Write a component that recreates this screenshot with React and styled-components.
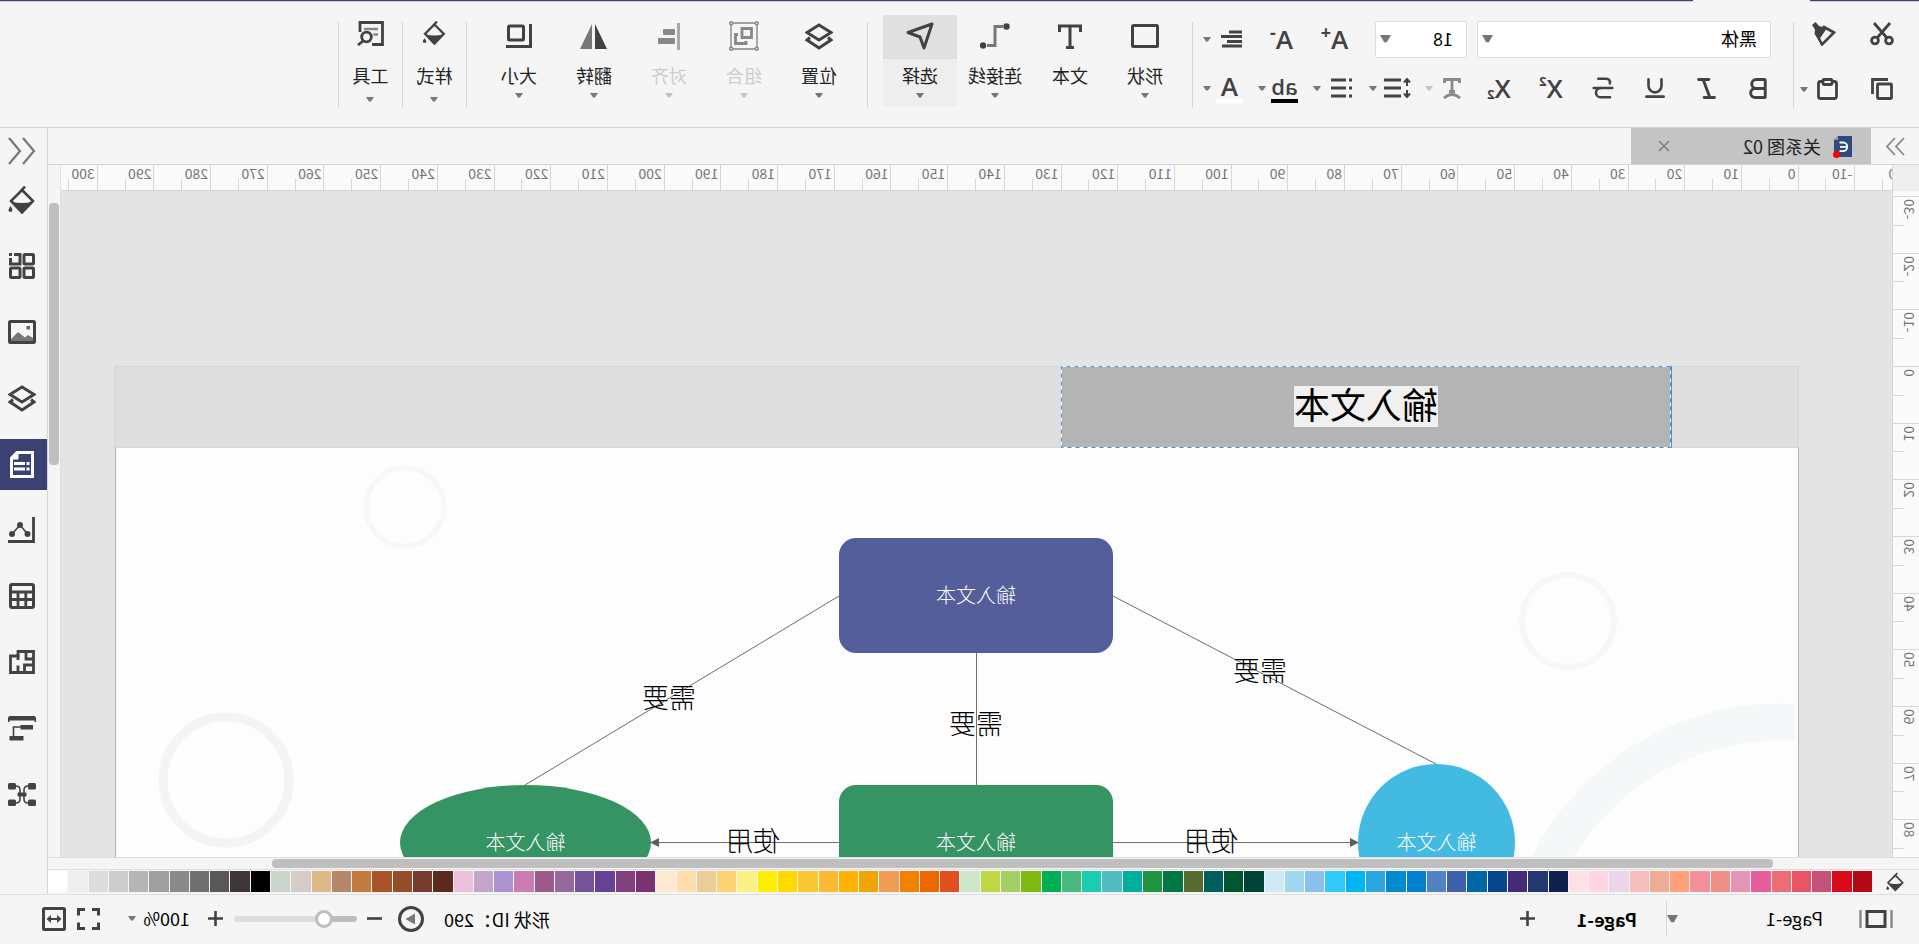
import React from 'react';
import styled, { createGlobalStyle, css } from 'styled-components';
import { Bold, Italic, Underline, Strikethrough } from 'lucide-react';

const GlobalStyle = createGlobalStyle`
  * {
    box-sizing: border-box;
  }
  body {
    margin: 0;
    overflow: hidden;
    background: #f5f5f5;
    color: #000;
    font-family: "Noto Sans CJK SC", "Noto Sans", sans-serif;
    font-size: 18px;
  }
  button, select, input {
    font: inherit;
    color: inherit;
  }
`;

const ink = '#424242';
const line = '#d6d6d6';

const Window = styled.div`
  display: flex;
  flex-direction: column;
  height: 100vh;
  background: #f5f5f5;
  transform: scaleX(-1);
`;

const TopLine = styled.div`
  display: flex;
  gap: 117px;
  height: 2px;
`;

const TopLinePart = styled.div`
  flex: ${(p) => (p.$grow ? 1 : '0 0 109px')};
  border-top: 1px solid #3c4174;
  background: #cfd0de;
`;

const Toolbar = styled.header`
  display: flex;
  align-items: flex-start;
  height: 126px;
  padding-top: 13px;
  border-bottom: 1px solid ${line};
`;

const Divider = styled.div`
  flex: none;
  width: 1px;
  height: ${(p) => p.$h || 86}px;
  margin-top: ${(p) => (p.$flat ? 0 : 7)}px;
  background: ${line};
`;

const PlainButton = styled.button`
  display: flex;
  align-items: center;
  justify-content: center;
  padding: 0;
  border: 0;
  background: none;
  color: ${(p) => (p.disabled ? '#8a8a8a' : ink)};
`;

const ClipboardGroup = styled.div`
  display: grid;
  grid-template-columns: 44px 66px;
  grid-template-rows: 38px 48px;
  gap: 12px 0;
  width: 125px;
  padding-left: 15px;
`;

const ClipButton = styled(PlainButton)`
  justify-content: ${(p) => (p.$wide ? 'flex-start' : 'center')};
  gap: 9px;
  padding-left: ${(p) => (p.$wide ? 22 : 0)}px;
`;

const FormatGroup = styled.div`
  width: 584px;
  margin: 0 8px;
`;

const FormatRow = styled.div`
  display: flex;
  align-items: center;
  height: ${(p) => p.$h}px;
  padding-left: ${(p) => p.$indent || 0}px;
`;

const FormatButton = styled(PlainButton)`
  width: ${(p) => p.$w || 52}px;
  height: 36px;
  justify-content: ${(p) => (p.$menu ? 'flex-end' : 'center')};
  gap: ${(p) => p.$gap || 10}px;
`;

const SelectBox = styled.label`
  position: relative;
  display: flex;
  align-items: center;
  width: ${(p) => p.$w}px;
  height: ${(p) => p.$h || 37}px;
  margin-right: ${(p) => p.$mr || 0}px;
  ${(p) =>
    p.$boxed &&
    css`
      border: 1px solid #dedede;
      border-radius: 2px;
      background: #fff;
    `}

  select {
    flex: 1;
    height: 100%;
    padding: 0 0 2px ${(p) => (p.$boxed ? 13 : 0)}px;
    border: 0;
    background: none;
    appearance: none;
    outline: none;
  }

  svg {
    position: absolute;
    right: ${(p) => (p.$boxed ? 4 : 0)}px;
    pointer-events: none;
  }
`;

const PageSelect = styled(SelectBox)`
  margin-left: 36px;
`;

const ZoomSelect = styled(SelectBox)`
  margin-left: 18px;
`;

const Glyph = styled.span`
  display: inline-flex;
  align-items: ${(p) => (p.$low ? 'flex-end' : 'flex-start')};
  font-family: "Open Sans", "Noto Sans", sans-serif;
  font-size: ${(p) => p.$size || 26}px;
  font-weight: 600;
  line-height: 26px;

  small {
    font-size: ${(p) => (p.$sign ? 18 : 13)}px;
    font-weight: 700;
    line-height: 13px;
  }
`;

const Swatched = styled.span`
  display: flex;
  flex-direction: column;
  align-items: center;
  width: 27px;
  border-bottom: 4px solid ${(p) => p.$color};
`;

const ToolGroup = styled.div`
  display: flex;
  gap: 1px;
  margin: 0 15px 0 ${(p) => p.$left}px;
`;

const ToolButton = styled.button`
  display: flex;
  flex-direction: column;
  align-items: center;
  width: ${(p) => p.$w || 74}px;
  height: 91px;
  padding: 0;
  border: 0;
  border-radius: 2px;
  background: ${(p) => (p.$active ? '#eeeeee' : 'none')};
  color: ${(p) => (p.disabled ? '#cdcdcd' : '#222')};
  line-height: 20px;
`;

const ToolIcon = styled.span`
  display: flex;
  align-items: center;
  justify-content: center;
  width: 100%;
  height: 44px;
  margin-bottom: 6px;
  padding-bottom: ${(p) => p.$lift || 2}px;
  border-radius: 2px 2px 0 0;
  background: ${(p) => (p.$active ? '#e0e0e0' : 'none')};
  color: ${ink};
`;

const ToolCaret = styled.span`
  display: flex;
  margin-top: ${(p) => (p.$low ? 12 : 8)}px;
`;

const Body = styled.div`
  display: flex;
  flex: 1;
  min-height: 0;
`;

const Main = styled.main`
  display: flex;
  flex: 1;
  flex-direction: column;
  min-width: 0;
`;

const TabBar = styled.nav`
  display: flex;
  height: 37px;
  border-bottom: 1px solid ${line};
`;

const Expand = styled(PlainButton)`
  width: 48px;
  color: #888;
`;

const FileTab = styled.div`
  display: flex;
  align-items: center;
  width: 240px;
  padding: 0 27px 0 19px;
  background: #c4c4c4;
  color: #222;

  span {
    flex: 1;
    margin-left: 11px;
  }
`;

const RulerRow = styled.div`
  display: flex;
  height: 26px;
`;

const RulerCorner = styled.div`
  flex: none;
  width: 27px;
  border-right: 1px solid ${line};
  background: #eeeeee;
`;

const HRuler = styled.div`
  flex: 1;
  min-width: 0;
  overflow-x: clip;
  border-bottom: 1px solid ${line};
  background: #fafafa;
`;

const HScale = styled.div`
  display: grid;
  grid-template-columns: repeat(33, 1fr);
  width: 1871px;
  height: 25px;
  margin-left: -20px;
`;

const HMark = styled.div`
  position: relative;
  padding-left: 2px;
  border-left: 1px solid ${line};
  color: #757575;
  font-size: 14px;
  line-height: 17px;

  &::after {
    content: '';
    position: absolute;
    left: 50%;
    bottom: 0;
    height: 11px;
    border-left: 1px solid ${line};
  }
`;

const VRuler = styled.div`
  width: 27px;
  overflow: hidden;
  border-right: 1px solid ${line};
  background: #fafafa;
`;

const VScale = styled.div`
  display: grid;
  grid-template-rows: repeat(12, 1fr);
  height: 680px;
  margin-top: 5px;
`;

const VMark = styled.div`
  position: relative;
  padding-top: 2px;
  border-top: 1px solid ${line};
  color: #757575;
  font-size: 14px;
  line-height: 18px;

  span {
    display: block;
    writing-mode: vertical-rl;
    transform: rotate(180deg);
    width: 18px;
  }

  &::after {
    content: '';
    position: absolute;
    top: 50%;
    right: 0;
    width: 11px;
    border-top: 1px solid ${line};
  }
`;

const CanvasRow = styled.div`
  display: flex;
  flex: 1;
  min-height: 0;
`;

const Canvas = styled.section`
  position: relative;
  flex: 1;
  overflow: hidden;
  background: #e4e4e4;
`;

const Page = styled.div`
  position: absolute;
  left: 93px;
  top: 175px;
  width: 1684px;
  height: 1190px;
  border: 1px solid #b2b2b2;
  border-top-color: ${line};
  background: #fdfdfd;
`;

const PageHeader = styled.div`
  position: absolute;
  left: -1px;
  top: -1px;
  width: 1685px;
  height: 82px;
  border: 1px solid ${line};
  background: #dedede;
`;

const Drawing = styled.svg`
  position: absolute;
  left: -1px;
  top: -1px;
`;

const Node = styled.div`
  position: absolute;
  left: ${(p) => p.$x}px;
  top: ${(p) => p.$y}px;
  display: flex;
  align-items: center;
  justify-content: center;
  width: ${(p) => p.$w}px;
  height: ${(p) => p.$h}px;
  padding-bottom: 2px;
  border-radius: ${(p) => p.$radius || '0'};
  background: ${(p) => p.$fill};
  color: #fff;
  font-size: 20px;
  font-weight: 300;
`;

const TitleText = styled.span`
  height: 41px;
  background: #f0f0f0;
  color: #000;
  font-size: 36px;
  font-weight: 400;
  line-height: 35px;
`;

const EdgeLabel = styled.span`
  position: absolute;
  left: ${(p) => p.$x}px;
  top: ${(p) => p.$y}px;
  transform: translate(-50%, -50%);
  font-size: 27px;
  font-weight: 300;
  line-height: 30px;
  white-space: nowrap;
`;

const VScroll = styled.div`
  flex: none;
  width: 13px;
  padding: 12px 2px 0 1px;
  border-left: 1px solid #e0e0e0;
  background: #f5f5f5;
`;

const HScroll = styled.div`
  height: 13px;
  padding: 1px 0 0 146px;
  border-top: 1px solid #dedede;
  border-bottom: 1px solid #dedede;
`;

const Thumb = styled.div`
  width: ${(p) => p.$w};
  height: ${(p) => p.$h};
  border-radius: 4px;
  background: #bfbfbf;
`;

const PaletteRow = styled.div`
  display: flex;
  height: 24px;
  padding: 1px 0 2px;
`;

const Palette = styled.div`
  display: grid;
  grid-template-columns: repeat(90, 1fr);
  flex: 1;
  gap: 1px;
`;

const Swatch = styled.button`
  padding: 0;
  border: 0;
  background: ${(p) => p.$color};
`;

const PaletteIcon = styled(PlainButton)`
  width: 47px;
`;

const Sidebar = styled.aside`
  display: flex;
  flex-direction: column;
  width: 48px;
  gap: 15px;
  border-left: 1px solid ${line};
`;

const SideButton = styled(PlainButton)`
  height: 51px;
  padding: 0 0 1px 3px;
  background: ${(p) => (p.$active ? '#3c4174' : 'none')};
  color: ${(p) => (p.$active ? '#fff' : ink)};
`;

const CollapseButton = styled(PlainButton)`
  height: 32px;
  padding: 14px 0 0 2px;
  color: #777;
`;

const StatusBar = styled.footer`
  display: flex;
  align-items: center;
  height: 50px;
  padding: 0 42px 2px 26px;
  border-top: 1px solid #dedede;
`;

const StatusButton = styled(PlainButton)`
  margin-left: ${(p) => p.$ml || 0}px;
`;

const PageTab = styled.button`
  margin: 0 42px 0 29px;
  padding: 0;
  border: 0;
  background: none;
  font-weight: 700;
`;

const StatusText = styled.span`
  margin-left: auto;
`;

const Zoom = styled.input`
  width: 123px;
  height: 20px;
  margin: 0 0 0 10px;
  appearance: none;
  background: none;

  &::-webkit-slider-runnable-track {
    height: 6px;
    border-radius: 3px;
    background: linear-gradient(to right, #bdbdbd 27%, #dedede 27%);
  }

  &::-webkit-slider-thumb {
    appearance: none;
    width: 18px;
    height: 18px;
    margin-top: -6px;
    border: 3px solid #bdbdbd;
    border-radius: 50%;
    background: #fff;
  }
`;

const Icon = ({ w = 24, h = 24, s = 3, children }) => (
  <svg width={w} height={h} viewBox={`0 0 ${w} ${h}`} fill="none" stroke="currentColor" strokeWidth={s} aria-hidden="true">
    {children}
  </svg>
);

const Caret = ({ w = 8, h = 5, color = '#777' }) => (
  <svg width={w} height={h} viewBox="0 0 8 5" preserveAspectRatio="none" aria-hidden="true">
    <path d="M0 0h8L5 4.6H3z" fill={color} />
  </svg>
);

const BucketIcon = ({ w = 27, h = 28 }) => (
  <svg width={w} height={h} viewBox="0 0 27 28" fill="none" stroke="currentColor" strokeWidth="2.6" aria-hidden="true">
    <path d="M10 0.5l4.5 5" />
    <path d="M13 4L2 15l11 11.5L24 15z" />
    <path d="M2 15.5q11 3 22 0L13 27z" fill="currentColor" stroke="none" />
    <path d="M24.5 20q3 4 1.600 5.200q-1.600 1-3.200 0q-1.300-1.200 1.600-5.200z" fill="currentColor" stroke="none" />
  </svg>
);

const LayersIcon = () => (
  <Icon w={28} h={27}>
    <path d="M14 2l12 7.500-12 7.500L2 9.500z" />
    <path d="M5 14.500l-3 2.500 12 8 12-8-3-2.500" />
  </Icon>
);

const icons = {
  cut: (
    <Icon w={24} h={24} s={2.8}>
      <path d="M4 1l13 15M20 1L7 16" />
      <circle cx="5" cy="18.500" r="3.400" />
      <circle cx="19" cy="18.500" r="3.400" />
    </Icon>
  ),
  painter: (
    <Icon w={27} h={24} s={2.6}>
      <path d="M4 10.500L14 5l7 8-5 9.500z" />
      <path d="M11 6L19 4l3.500-4L26 3l-3 4.500.500 4.500L19 18z" fill="currentColor" stroke="none" />
    </Icon>
  ),
  copy: (
    <Icon w={22} h={22} s={2.8}>
      <rect x="1.500" y="6" width="14" height="14.500" rx="1" />
      <path d="M5 1.500h15.500V16" />
    </Icon>
  ),
  paste: (
    <Icon w={21} h={22} s={2.8}>
      <rect x="1.500" y="3.500" width="18" height="17" rx="2" />
      <rect x="6" y="1.500" width="9" height="5" rx="1" fill="#f5f5f5" />
    </Icon>
  ),
  align: (
    <Icon w={21} h={18}>
      <path d="M0 2h13M0 6.500h21M0 11.500h15M0 16h20" />
    </Icon>
  ),
  curveText: (
    <Icon w={18} h={21} s={2.8}>
      <path d="M1.500 5V1.500h15V5M9 1.500V13M6 13.500h6" />
      <path d="M1 20q8-7 16 0" />
    </Icon>
  ),
  spacing: (
    <Icon w={27} h={20} s={2.8}>
      <path d="M10 2h17M10 10h17M10 18h17" />
      <path d="M4 2v6M4 12v6M1 4.500L4 1l3 3.500M1 15.500L4 19l3-3.500" strokeWidth="2" />
    </Icon>
  ),
  list: (
    <Icon w={21} h={20} s={2.800}>
      <path d="M0 2h3M0 10h3M0 18h3M6 2h15M6 10h15M6 18h15" />
    </Icon>
  ),
  shape: (
    <Icon w={28} h={24}>
      <rect x="1.500" y="1.500" width="25" height="21" rx="1" />
    </Icon>
  ),
  text: (
    <Icon w={24} h={25}>
      <path d="M1.500 8V2h21v6M12 2v21M8 23.500h8" />
    </Icon>
  ),
  connector: (
    <Icon w={30} h={26}>
      <path d="M7 3.500h8v19h8" stroke="#777" />
      <circle cx="3.500" cy="3.500" r="3.200" fill="currentColor" stroke="none" />
      <circle cx="27" cy="22.500" r="3.200" fill="currentColor" stroke="none" />
    </Icon>
  ),
  select: (
    <Icon w={28} h={28}>
      <path d="M2 2l24 8.500-12 4.500-4 11z" strokeLinejoin="round" />
    </Icon>
  ),
  group: (
    <Icon w={30} h={30} s={1.400}>
      <g stroke="#888">
        <path d="M4 2h22M4 28h22M2 4v22M28 4v22" />
        <circle cx="2.200" cy="2.200" r="1.500" />
        <circle cx="27.800" cy="2.200" r="1.500" />
        <circle cx="2.200" cy="27.800" r="1.500" />
        <circle cx="27.800" cy="27.800" r="1.500" />
        <path d="M7.500 7.500h9.500v9h-9.500zM21 13.500h2.500v9H13v-2.500" strokeWidth="2.800" />
      </g>
    </Icon>
  ),
  alignObjects: (
    <Icon w={22} h={27}>
      <path d="M1.500 0v27" stroke="#aaa" />
      <rect x="5" y="6" width="12" height="6" rx="1" fill="#888" stroke="none" />
      <rect x="5" y="15" width="17" height="6" rx="1" fill="#888" stroke="none" />
    </Icon>
  ),
  flip: (
    <Icon w={27} h={25}>
      <path d="M12 0v25H0z" fill="currentColor" stroke="none" />
      <path d="M15 0v25h12z" fill="#777" stroke="none" />
    </Icon>
  ),
  size: (
    <Icon w={26} h={24}>
      <path d="M1.500 0v22.500H26" />
      <rect x="8.500" y="2" width="15" height="14" rx="1" />
    </Icon>
  ),
  tools: (
    <Icon w={27} h={25} s={2.800}>
      <path d="M24 11V1.500H1.500v22H12" />
      <path d="M6 8h14M6 13.500h4.500" stroke="#888" strokeWidth="2.400" />
      <circle cx="17.500" cy="16" r="4.800" />
      <path d="M21 20l5 4" />
    </Icon>
  ),
  grid: (
    <Icon w={26} h={26}>
      <rect x="1.500" y="1.500" width="9.500" height="9.500" rx="1" />
      <rect x="1.500" y="15" width="9.500" height="9.500" rx="1" />
      <rect x="15" y="15" width="9.500" height="9.500" rx="1" />
      <path d="M21 1.500h-6v9.500h9.500V5M23 1.500h3" />
    </Icon>
  ),
  image: (
    <Icon w={28} h={24}>
      <path d="M3 21v-3l5-3 3 2.500L18 12l7 7v2z" fill="#777" stroke="none" />
      <rect x="6" y="6" width="3.500" height="3.500" fill="#666" stroke="none" />
      <rect x="1.500" y="1.500" width="25" height="21" rx="1" />
    </Icon>
  ),
  doc: (
    <Icon w={24} h={27}>
      <path d="M1.500 1.500h15.500l5.500 5.500v18.500h-21z" />
      <path d="M16 1.500v6.500h6z" fill="currentColor" strokeWidth="1" />
      <path d="M4.500 12.500h3M9 12.500h11M4.500 18h3M9 18h11" strokeWidth="2.800" />
    </Icon>
  ),
  chart: (
    <Icon w={27} h={26} s={2.800}>
      <path d="M1.500 0v24.500H27" />
      <path d="M7.500 17L15 8l8 9" strokeWidth="1.600" />
      <g fill="currentColor" stroke="none">
        <circle cx="7.500" cy="17" r="3" />
        <circle cx="15" cy="8" r="3" />
        <circle cx="23" cy="17" r="3" />
      </g>
    </Icon>
  ),
  table: (
    <Icon w={26} h={26}>
      <rect x="1.500" y="1.500" width="23" height="23" rx="1.500" />
      <path d="M1 9h24M1 16.500h24M9.200 9v16M17 9v16" strokeWidth="2.800" />
    </Icon>
  ),
  plan: (
    <Icon w={26} h={24} s={2.800}>
      <path d="M1.500 1.500H17V6h7.500v16.500h-23z" />
      <path d="M17 4v6M9 2v7H1M1 15h9.500v7M17 15.500V22" strokeWidth="2.800" />
    </Icon>
  ),
  timeline: (
    <Icon w={28} h={25}>
      <g fill="currentColor" stroke="none">
        <path d="M1.500 0H26.500L28 1.500V6h-1.500V4.500h-25V6H0V1.500z" />
        <rect x="3" y="9" width="12.500" height="4.500" />
        <rect x="12.500" y="20" width="14" height="4.500" />
      </g>
      <path d="M15 11h7.500v9" strokeWidth="1.600" />
    </Icon>
  ),
  mindmap: (
    <Icon w={28} h={23}>
      <g fill="currentColor" stroke="none">
        <rect x="0" y="0" width="8" height="6.500" rx="1.500" />
        <rect x="20" y="0" width="8" height="6.500" rx="1.500" />
        <rect x="0" y="16.500" width="8" height="6.500" rx="1.500" />
        <rect x="20" y="16.500" width="8" height="6.500" rx="1.500" />
        <rect x="9.500" y="9.500" width="9" height="4" rx="1" />
      </g>
      <path d="M8 3q4 0 4 4v9q0 4-4 4M20 3q-4 0-4 4v9q0 4 4 4" strokeWidth="1.600" />
    </Icon>
  ),
};

const colors = `
  b40816 d90a1c c75078 ea5566 ec6d73 e75e9c e495b6 f08e88 f2919b ffa07a f0ab95 f6bfbb ead5e9 ffd5e6 ffe0e6
  10214f 22386f 432c77 08468c 0068a6 3f60ae 5382c4 0080cf 008bce 2ca6e0 00b6f2 31c8fa 8ac1ea a0d8ef cdeaf6
  004235 00562f 005f5c 556b2f 007844 1d963f 00ae9d 51bcc2 19cdb3 48ba80 00ae54 80b90f a3d065 bed743 cde7c8
  e24f1f eb6800 f08200 f29b55 f1a500 ffb200 fdb933 fac832 ffda00 ffee00 fcf284 fed373 ebcd98 fedcac fde8d0
  7a3272 823f80 664294 735399 97679f 9c598a cb7cb0 aa93d0 c5a5c9 ebc1db 5c2a1b 783c2f 934d28 a95426 c27a3d
  b5866a deb887 d5ccc7 cad5cb 000000 3d3635 595757 717070 898989 9fa0a0 b5b5b6 cccece dcdcdc eeeeee ffffff
`.trim().split(/\s+/);

const insertTools = [
  { name: '形状', icon: icons.shape, menu: true },
  { name: '文本', icon: icons.text },
  { name: '连接线', icon: icons.connector, menu: true },
  { name: '选择', icon: icons.select, menu: true, active: true },
];

const arrangeTools = [
  { name: '位置', icon: <LayersIcon />, menu: true },
  { name: '组合', icon: icons.group, menu: true, disabled: true },
  { name: '对齐', icon: icons.alignObjects, menu: true, disabled: true },
  { name: '翻转', icon: icons.flip, menu: true },
  { name: '大小', icon: icons.size, menu: true },
];

const sideTools = [
  { name: 'fill', icon: <BucketIcon /> },
  { name: 'symbols', icon: icons.grid },
  { name: 'image', icon: icons.image },
  { name: 'layers', icon: <LayersIcon /> },
  { name: 'page', icon: icons.doc, active: true },
  { name: 'chart', icon: icons.chart },
  { name: 'table', icon: icons.table },
  { name: 'floor plan', icon: icons.plan },
  { name: 'timeline', icon: icons.timeline },
  { name: 'mind map', icon: icons.mindmap },
];

const edgeLabels = [
  { text: '需要', x: 538, y: 303 },
  { text: '需要', x: 822, y: 356 },
  { text: '需要', x: 1129, y: 330 },
  { text: '使用', x: 587, y: 473 },
  { text: '使用', x: 1045, y: 473 },
];

const hMarks = Array.from({ length: 33 }, (_, i) => (i - 2) * 10);
const vMarks = Array.from({ length: 12 }, (_, i) => (i - 3) * 10);

const Tool = ({ tool, low, width }) => (
  <ToolButton $w={width} $active={tool.active} disabled={tool.disabled}>
    <ToolIcon $active={tool.active} $lift={low ? 8 : 2}>{tool.icon}</ToolIcon>
    {tool.name}
    {tool.menu && (
      <ToolCaret $low={low}>
        <Caret color={tool.disabled ? '#c4c4c4' : '#777'} />
      </ToolCaret>
    )}
  </ToolButton>
);

const Ribbon = () => (
  <Toolbar>
    <ClipboardGroup>
      <ClipButton aria-label="cut">{icons.cut}</ClipButton>
      <ClipButton $wide aria-label="format painter">{icons.painter}</ClipButton>
      <ClipButton aria-label="copy">{icons.copy}</ClipButton>
      <ClipButton $wide aria-label="paste">{icons.paste}<Caret /></ClipButton>
    </ClipboardGroup>
    <Divider />
    <FormatGroup>
      <FormatRow $h={48} $indent={14}>
        <SelectBox $w={294} $mr={10} $boxed>
          <select aria-label="font"><option>黑体</option></select>
          <Caret w={11} h={8} />
        </SelectBox>
        <SelectBox $w={92} $mr={14} $boxed>
          <select aria-label="font size"><option>18</option></select>
          <Caret w={11} h={8} />
        </SelectBox>
        <FormatButton $w={53} aria-label="larger"><Glyph $sign>A<small>+</small></Glyph></FormatButton>
        <FormatButton $w={53} aria-label="smaller"><Glyph $sign>A<small>-</small></Glyph></FormatButton>
        <FormatButton $w={52} $menu aria-label="align">{icons.align}<Caret /></FormatButton>
      </FormatRow>
      <FormatRow $h={50}>
        <FormatButton aria-label="bold"><Bold size={27} strokeWidth={2.6} /></FormatButton>
        <FormatButton aria-label="italic"><Italic size={27} strokeWidth={2.6} /></FormatButton>
        <FormatButton aria-label="underline"><Underline size={26} strokeWidth={2.4} /></FormatButton>
        <FormatButton aria-label="strikethrough"><Strikethrough size={28} strokeWidth={2.2} /></FormatButton>
        <FormatButton aria-label="superscript"><Glyph>X<small>2</small></Glyph></FormatButton>
        <FormatButton aria-label="subscript"><Glyph $low>X<small>2</small></Glyph></FormatButton>
        <FormatButton $w={48} $menu disabled aria-label="curve">{icons.curveText}<Caret color="#c4c4c4" /></FormatButton>
        <FormatButton $w={56} $menu $gap={7} aria-label="line spacing">{icons.spacing}<Caret /></FormatButton>
        <FormatButton $w={56} $menu aria-label="list">{icons.list}<Caret /></FormatButton>
        <FormatButton $w={55} $menu $gap={5} aria-label="highlight">
          <Swatched $color="#000"><Glyph $size={22}>ab</Glyph></Swatched><Caret />
        </FormatButton>
        <FormatButton $w={55} $menu $gap={5} aria-label="text colour">
          <Swatched $color="#fff"><Glyph>A</Glyph></Swatched><Caret />
        </FormatButton>
      </FormatRow>
    </FormatGroup>
    <Divider />
    <ToolGroup $left={10}>
      {insertTools.map((t) => <Tool key={t.name} tool={t} />)}
    </ToolGroup>
    <Divider />
    <ToolGroup $left={11}>
      {arrangeTools.map((t) => <Tool key={t.name} tool={t} />)}
    </ToolGroup>
    <Divider />
    <Tool tool={{ name: '样式', icon: <BucketIcon w={24} h={24} />, menu: true }} low width={63} />
    <Divider />
    <Tool tool={{ name: '工具', icon: icons.tools, menu: true }} low width={63} />
    <Divider />
  </Toolbar>
);

const Diagram = () => (
  <Canvas>
    <Page>
      <PageHeader />
      <Drawing width="1685" height="600">
        <defs>
          <clipPath id="inside"><rect x="4" y="82" width="1676" height="600" /></clipPath>
        </defs>
        <g fill="none" clipPath="url(#inside)">
          <circle cx="1394" cy="141" r="39" stroke="#f4f8f9" strokeWidth="5" />
          <circle cx="1573" cy="414" r="63" stroke="#f5f3f5" strokeWidth="9" />
          <circle cx="231" cy="255" r="46" stroke="#f4f8f9" strokeWidth="6" />
          <circle cx="19" cy="615" r="259" stroke="#f4f8f9" strokeWidth="37" />
        </g>
        <g stroke="#6e6e6e" strokeWidth="1" fill="none">
          <path d="M686 230L363 398M960 230l314 189M822.500 287v132M686 476.500H445M960 476.500h186" />
        </g>
        <path d="M440 476.500l9-4.500v9zM1149 476.500l-9-4.500v9z" fill="#5e5e5e" />
      </Drawing>
      <Node $x={127} $y={0} $w={610} $h={81} $fill="#b4b4b4"><TitleText>输入文本</TitleText></Node>
      <Node $x={685} $y={171} $w={274} $h={115} $fill="#545e9a" $radius="17px">输入文本</Node>
      <Node $x={685} $y={418} $w={274} $h={115} $fill="#369363" $radius="17px">输入文本</Node>
      <Node $x={283} $y={397} $w={157} $h={157} $fill="#42bae1" $radius="50%">输入文本</Node>
      <Node $x={1147} $y={418} $w={251} $h={115} $fill="#369363" $radius="50%">输入文本</Node>
      <Drawing width="760" height="90">
        <g fill="none">
          <rect x="128.500" y="0.500" width="609" height="81" stroke="#fff" />
          <rect x="128.500" y="0.500" width="609" height="81" stroke="#4a90e2" strokeDasharray="4 4" />
          <path d="M127.500 0v82" stroke="#4a90e2" />
        </g>
      </Drawing>
      {edgeLabels.map((l) => <EdgeLabel key={l.x} $x={l.x} $y={l.y}>{l.text}</EdgeLabel>)}
    </Page>
  </Canvas>
);

const App = () => {
  return (
    <>
      <GlobalStyle />
      <Window>
        <TopLine>
          <TopLinePart />
          <TopLinePart $grow />
        </TopLine>
        <Ribbon />
        <Body>
          <Main>
            <TabBar>
              <Expand aria-label="expand">
                <Icon w={20} h={19} s={1.800}><path d="M1 1l8 8.500L1 18M10 1l8 8.500L10 18" /></Icon>
              </Expand>
              <FileTab>
                <svg width="20" height="24" viewBox="0 0 20 24" aria-hidden="true">
                  <path d="M0 2h14l4 4v17H0z" fill="#2f4a80" />
                  <path d="M14 2v4h4z" fill="#8e9cbb" />
                  <path d="M12.500 8.500H9a4.300 4.300 0 0 0 0 8.600h3.500M5 12.800h7" fill="none" stroke="#fff" strokeWidth="1.800" />
                  <circle cx="15.500" cy="20.500" r="3.500" fill="#f00" />
                </svg>
                <span>关系图 02</span>
                <PlainButton aria-label="close">
                  <Icon w={12} h={12} s={1.600}><path d="M1 1l10 10M11 1L1 11" stroke="#808080" /></Icon>
                </PlainButton>
              </FileTab>
            </TabBar>
            <RulerRow>
              <RulerCorner />
              <HRuler>
                <HScale>{hMarks.map((m) => <HMark key={m}>{m}</HMark>)}</HScale>
              </HRuler>
              <VScroll />
            </RulerRow>
            <CanvasRow>
              <VRuler>
                <VScale>{vMarks.map((m) => <VMark key={m}><span>{m}</span></VMark>)}</VScale>
              </VRuler>
              <Diagram />
              <VScroll><Thumb $w="10px" $h="262px" /></VScroll>
            </CanvasRow>
            <HScroll><Thumb $w="87%" $h="9px" /></HScroll>
            <PaletteRow>
              <PaletteIcon aria-label="fill colour"><BucketIcon w={18} h={20} /></PaletteIcon>
              <Palette>
                {colors.map((c) => <Swatch key={c} $color={`#${c}`} aria-label={`#${c}`} />)}
              </Palette>
            </PaletteRow>
          </Main>
          <Sidebar>
            <CollapseButton aria-label="collapse">
              <Icon w={28} h={28} s={2.200}><path d="M13 1L2 14l11 13M27 1L16 14l11 13" /></Icon>
            </CollapseButton>
            {sideTools.map((t) => (
              <SideButton key={t.name} $active={t.active} aria-label={t.name}>{t.icon}</SideButton>
            ))}
          </Sidebar>
        </Body>
        <StatusBar>
          <StatusButton aria-label="page view">
            <Icon w={34} h={18}>
              <path d="M1.500 0v18M32.500 0v18" stroke="#888" strokeWidth="2.400" />
              <rect x="8" y="1.500" width="18" height="15" />
            </Icon>
          </StatusButton>
          <PageSelect $w={156} $h={36}>
            <select aria-label="page"><option>Page-1</option></select>
            <Caret w={11} h={8} />
          </PageSelect>
          <Divider $h={36} $flat />
          <PageTab>Page-1</PageTab>
          <StatusButton aria-label="add page">
            <Icon w={15} h={15} s={2.600}><path d="M7.500 0v15M0 7.500h15" /></Icon>
          </StatusButton>
          <StatusText>形状 ID：290</StatusText>
          <StatusButton $ml={20} aria-label="present">
            <Icon w={26} h={26}>
              <circle cx="13" cy="13" r="11.500" />
              <path d="M9 7.500l9.500 5.500L9 18.500z" fill="#777" stroke="none" />
            </Icon>
          </StatusButton>
          <StatusButton $ml={16} aria-label="zoom out">
            <Icon w={15} h={15} s={2.600}><path d="M0 7.500h15" /></Icon>
          </StatusButton>
          <Zoom type="range" min="0" max="100" defaultValue="23" aria-label="zoom" />
          <StatusButton $ml={11} aria-label="zoom in">
            <Icon w={15} h={15} s={2.600}><path d="M7.500 0v15M0 7.500h15" /></Icon>
          </StatusButton>
          <ZoomSelect $w={62} $h={36}>
            <select aria-label="zoom level"><option>100%</option></select>
            <Caret />
          </ZoomSelect>
          <StatusButton $ml={28} aria-label="full screen">
            <Icon w={23} h={22}>
              <path d="M1.500 7.500v-6H8M15 1.500h6.500v6M21.500 14.500v6H15M8 20.500H1.500v-6" />
            </Icon>
          </StatusButton>
          <StatusButton $ml={11} aria-label="fit width">
            <Icon w={24} h={24}>
              <rect x="1.500" y="1.500" width="21" height="21" rx="1" />
              <path d="M7 12h10" strokeWidth="2" />
              <path d="M4.500 12L9 8v8zM19.500 12L15 8v8z" fill="currentColor" stroke="none" />
            </Icon>
          </StatusButton>
        </StatusBar>
      </Window>
    </>
  );
};

export default App;
